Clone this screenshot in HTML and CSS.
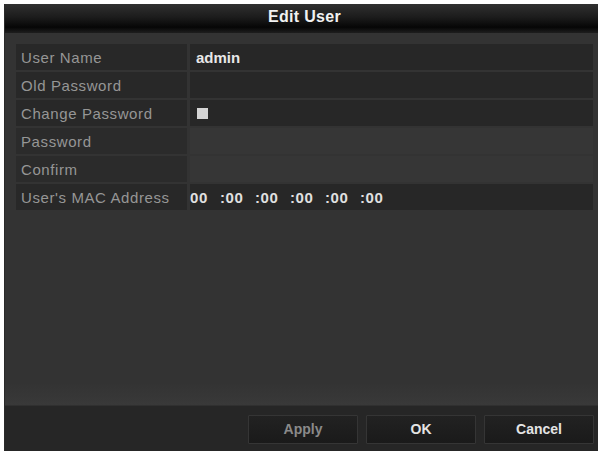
FILE: index.html
```html
<!DOCTYPE html>
<html>
<head>
<meta charset="utf-8">
<link rel="stylesheet" href="styles.css">
</head>
<body>
<div class="window">
  <div class="titlebar">Edit User</div>
  <div class="content">
    <div class="row">
      <div class="label">User Name</div>
      <div class="value"><span class="strong">admin</span></div>
    </div>
    <div class="row">
      <div class="label">Old Password</div>
      <div class="value"></div>
    </div>
    <div class="row">
      <div class="label">Change Password</div>
      <div class="value"><span class="checkbox"></span></div>
    </div>
    <div class="row disabled">
      <div class="label">Password</div>
      <div class="value"></div>
    </div>
    <div class="row disabled">
      <div class="label">Confirm</div>
      <div class="value"></div>
    </div>
    <div class="row">
      <div class="label">User's MAC Address</div>
      <div class="value mac">
        <span class="oct">00</span><span class="oct">:00</span><span class="oct">:00</span><span class="oct">:00</span><span class="oct">:00</span><span class="oct">:00</span>
      </div>
    </div>
  </div>
  <div class="footer">
    <button class="btn dim">Apply</button>
    <button class="btn">OK</button>
    <button class="btn">Cancel</button>
  </div>
</div>
</body>
</html>
```

FILE: styles.css
```css
html, body {
  margin: 0;
  padding: 0;
  background: #ffffff;
}
body {
  padding: 4px 0 0 4px;
  font-family: "Liberation Sans", Arial, sans-serif;
}
.window {
  width: 594px;
  height: 447px;
  background: #333333;
  display: flex;
  flex-direction: column;
  border-left: 1px solid #2a2a2a;
  box-sizing: border-box;
}
.titlebar {
  height: 29px;
  flex: none;
  background: linear-gradient(#303030 0%, #1c1c1c 45%, #060606 80%, #1e1e1e 100%);
  color: #f2f2f2;
  font-weight: bold;
  font-size: 16px;
  letter-spacing: 0.3px;
  display: flex;
  align-items: center;
  justify-content: center;
  padding-bottom: 4px;
  box-sizing: border-box;
  padding-left: 6px;
}
.content {
  flex: 1;
  padding: 11px 5px 0 11px;
  display: flex;
  flex-direction: column;
  gap: 2px;
  background: linear-gradient(#333333 0%, #333333 94%, #393939 100%);
}
.row {
  display: flex;
  height: 26px;
  gap: 3px;
}
.label {
  width: 171px;
  flex: none;
  background: #282828;
  color: #969696;
  font-size: 15px;
  letter-spacing: 0.6px;
  display: flex;
  align-items: center;
  padding-left: 5px;
  box-sizing: border-box;
  white-space: nowrap;
}
.value {
  flex: 1;
  background: #272727;
  display: flex;
  align-items: center;
  padding-left: 6px;
  color: #e6e6e6;
  font-weight: bold;
  font-size: 15px;
}
.row.disabled .label {
  background: #2b2b2b;
}
.row.disabled .value {
  background: #363636;
}
.strong {
  color: #e8e8e8;
}
.checkbox {
  width: 11px;
  height: 11px;
  background: #d4d4d4;
  margin-left: 1px;
}
.mac {
  padding-left: 0;
}
.oct {
  width: 35px;
  flex: none;
  color: #e0e0e0;
  letter-spacing: 0.6px;
}
.oct:first-child {
  width: 30px;
}
.footer {
  height: 46px;
  flex: none;
  background: #262626;
  border-top: 1px solid #303030;
  box-sizing: border-box;
  display: flex;
  justify-content: flex-end;
  align-items: flex-start;
  padding: 9px 4px 0 0;
  gap: 8px;
}
.btn {
  width: 110px;
  height: 29px;
  background: linear-gradient(#222222, #1a1a1a);
  border: 1px solid #353535;
  border-radius: 1px;
  color: #e4e4e4;
  font-family: "Liberation Sans", Arial, sans-serif;
  font-size: 14px;
  font-weight: bold;
  padding: 0 0 2px 0;
}
.btn.dim {
  color: #8a8a8a;
}
```
